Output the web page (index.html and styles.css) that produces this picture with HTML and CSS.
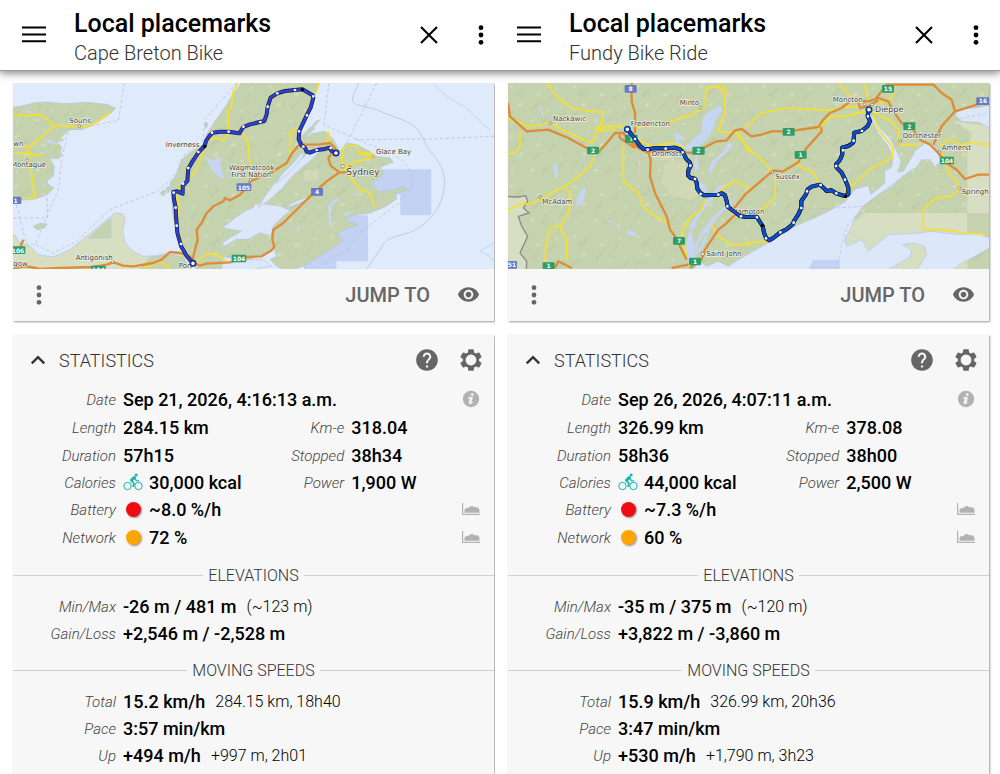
FILE: index.html
```html
<!DOCTYPE html>
<html lang="en">
<head>
<meta charset="utf-8">
<meta name="viewport" content="width=device-width, initial-scale=1">
<title>Local placemarks</title>
<link rel="stylesheet" href="styles.css">
</head>
<body>
<svg class="sprite" aria-hidden="true">
  <defs>
    <symbol id="i-menu" viewBox="0 0 24 24"><path d="M0 3.4h24v2H0zM0 10.4h24v2H0zM0 17.2h24v2H0z"/></symbol>
    <symbol id="i-close" viewBox="0 0 24 24"><path d="M4 4l16 16M20 4L4 20" fill="none" stroke="currentColor" stroke-width="2.1"/></symbol>
    <symbol id="i-more" viewBox="0 0 24 24"><circle cx="12" cy="4.7" r="2.4"/><circle cx="12" cy="12" r="2.4"/><circle cx="12" cy="19.3" r="2.4"/></symbol>
    <symbol id="i-eye" viewBox="0 0 24 24"><path d="M12 4.5C7 4.500 2.730 7.610 1 12c1.730 4.390 6 7.500 11 7.500s9.270-3.110 11-7.500c-1.730-4.390-6-7.500-11-7.500zM12 17c-2.760 0-5-2.240-5-5s2.240-5 5-5 5 2.240 5 5-2.240 5-5 5zm0-8c-1.660 0-3 1.340-3 3s1.340 3 3 3 3-1.340 3-3-1.340-3-3-3z"/></symbol>
    <symbol id="i-up" viewBox="0 0 24 24"><path d="M4.500 16L12 8.500l7.500 7.500" fill="none" stroke="currentColor" stroke-width="2.800"/></symbol>
    <symbol id="i-help" viewBox="0 0 24 24"><path d="M12 2C6.480 2 2 6.480 2 12s4.480 10 10 10 10-4.480 10-10S17.520 2 12 2zm1 17h-2v-2h2v2zm2.070-7.750l-.9.920C13.450 12.900 13 13.500 13 15h-2v-.5c0-1.100.450-2.100 1.170-2.830l1.240-1.260c.370-.360.590-.860.590-1.410 0-1.100-.9-2-2-2s-2 .9-2 2H8c0-2.210 1.790-4 4-4s4 1.790 4 4c0 .880-.360 1.680-.930 2.250z"/></symbol>
    <symbol id="i-gear" viewBox="0 0 24 24"><path fill-rule="evenodd" d="M19.430 12.980c.04-.32.07-.64.07-.98s-.03-.66-.07-.98l2.110-1.650c.19-.15.24-.42.12-.64l-2-3.460c-.12-.22-.39-.3-.61-.22l-2.490 1c-.52-.4-1.080-.73-1.690-.98l-.38-2.650C14.460 2.180 14.250 2 14 2h-4c-.25 0-.46.18-.49.42l-.38 2.650c-.61.25-1.170.59-1.690.98l-2.490-1c-.23-.09-.49 0-.61.22l-2 3.460c-.13.22-.07.49.12.64l2.110 1.650c-.04.32-.07.65-.07.98s.03.66.07.98l-2.110 1.650c-.19.15-.24.42-.12.64l2 3.460c.12.22.39.3.61.22l2.490-1c.52.4 1.080.73 1.690.98l.38 2.650c.03.24.24.42.49.42h4c.25 0 .46-.18.49-.42l.38-2.650c.61-.25 1.170-.59 1.690-.98l2.490 1c.23.09.49 0 .61-.22l2-3.460c.12-.22.07-.49-.12-.64l-2.110-1.650zM12 17a5 5 0 1 1 0-10 5 5 0 0 1 0 10z"/></symbol>
    <symbol id="i-info" viewBox="0 0 18 18"><circle cx="9" cy="9" r="8.200"/><circle cx="10.300" cy="4.600" r="1.400" fill="#f7f7f7"/><path d="M6.600 7.300h4l-1.500 5.400c-.1.600.4.500 1.400-.4-.9 1.600-3.900 2.400-3.500.3l1.200-4.200H6.400z" fill="#f7f7f7" stroke="#f7f7f7" stroke-width=".6"/></symbol>
    <symbol id="i-chart" viewBox="0 0 18 14"><path d="M0 1h1.200v10.800H18V13H0zM2.500 10.800V7.200L5 5.700l1.500.6L8 4l1 .8 1.200-1.200 1.500 1.800 1-1L14.500 5.800l1-.8 2 2.600v3.200z"/></symbol>
    <symbol id="i-bike" viewBox="0 0 20 18"><g fill="none" stroke="currentColor"><circle cx="4.500" cy="13" r="3.700" stroke-width="1"/><circle cx="15.500" cy="13" r="3.700" stroke-width="1"/><path d="M12.300 4.800L8.200 7.600l2.600 2.600-.6 3.800" stroke-width="1.700"/><path d="M12 5l1.300 2.600 3 .2" stroke-width="1.300"/></g><path d="M7 6.500l4-3.700 2.200 1.400-2.800 3.300-2.400 1z"/><circle cx="13.200" cy="2" r="1.500"/></symbol>
    <pattern id="flecks" width="190" height="150" patternUnits="userSpaceOnUse">
      <path fill="#dde3c4" opacity=".6" d="M12 20l9-5 3 6-8 6zM60 8l5 3-6 4zM95 42l10-2 4 6-7 3-9 1zM150 25l6-4 4 8-8 1zM38 75l12-7 6 5-10 9zM120 92l8-4 2 7-6 3zM168 78l5 1-2 8-5-3zM75 122l10-5 5 3-9 8zM18 128l6-4 2 6-5 4zM150 135l9-6 3 4-8 5z"/>
      <path fill="#aebf97" opacity=".3" d="M30 45l25-20 5 4-24 21zM80 85l22-18 3 4-20 18zM130 60l18-16 5 3-19 17zM10 105l20-16 3 3-20 17zM105 130l24-18 3 4-22 17zM160 110l17-14 4 3-18 15z"/>
    </pattern>
  </defs>
</svg>

<header class="appbar">
  <div class="bar">
    <button class="icon-btn menu" aria-label="Menu"><svg class="ic24"><use href="#i-menu"/></svg></button>
    <div class="titles"><h1>Local placemarks</h1><p>Cape Breton Bike</p></div>
    <button class="icon-btn" aria-label="Close"><svg class="ic24"><use href="#i-close"/></svg></button>
    <button class="icon-btn" aria-label="More"><svg class="ic24"><use href="#i-more"/></svg></button>
  </div>
  <div class="bar">
    <button class="icon-btn menu" aria-label="Menu"><svg class="ic24"><use href="#i-menu"/></svg></button>
    <div class="titles"><h2>Local placemarks</h2><p>Fundy Bike Ride</p></div>
    <button class="icon-btn" aria-label="Close"><svg class="ic24"><use href="#i-close"/></svg></button>
    <button class="icon-btn" aria-label="More"><svg class="ic24"><use href="#i-more"/></svg></button>
  </div>
</header>

<main class="panels">
  <section class="panel">
    <div class="card">
      <svg class="map" viewBox="9 10 1443 557" role="img" aria-label="Map of the Cape Breton Bike track">
        <rect class="sea" x="0" y="0" width="1470" height="580"/>
        <g class="deep">
          <path d="M1120 269h144v138h-93v-62l-60-10-30-10z"/>
          <path d="M1010 407h64v138h-95v30H882v-60l60-50z"/>
        </g>
        <g class="bounds">
          <path d="M343 10L325 122 175 152 155 240 145 330 75 495 130 520 200 485 300 390 440 335 490 295 520 230 580 180 585 120 680 10M9 415H112V350M15 360L50 495 75 495"/>
          <path d="M957 10L942 135 1020 170 1130 215M1100 10L1010 190M1035 180L1260 178 1452 170M1130 215C1190 240 1215 280 1205 325L1160 375 1060 450 1010 510 930 560"/>
        </g>
        <path class="shelf" d="M1045 10C1040 40 1010 60 1040 75L1100 90C1190 130 1220 120 1250 200 1280 240 1310 270 1303 325 1290 400 1250 430 1210 455 1150 475 1130 470 1110 510L1065 575"/>
        <path class="coastline" d="M1270 12L1310 50 1370 85 1410 125 1440 152M1452 490L1410 515 1440 530 1452 545"/>
        <g class="land">
          <path d="M0 85L40 78 75 69 110 67 160 72 230 68 290 74 318 86 300 102 270 122 245 138 215 150 178 150 166 160 155 172 160 182 140 188 158 205 150 212 156 225 145 238 120 234 133 262 130 290 114 300 112 312 132 325 112 345 75 358 0 364z"/>
          <path d="M700 0L680 30 665 50 640 90 615 125 592 160 578 195 545 215 515 240 505 270 497 290 480 310 485 340 487 400 498 450 510 500 528 530 545 548 560 570 700 572 720 540 765 520 790 505 800 530 780 540 800 560 830 575 880 560 920 535 970 505 1000 485 982 462 1015 445 1045 436 1005 420 1030 407 1080 400 1125 382 1160 358 1158 340 1195 332 1180 320 1150 332 1110 335 1085 318 1095 305 1125 280 1110 262 1150 248 1140 235 1090 230 1080 215 1040 195 1010 190 990 215 970 180 945 155 905 162 885 180 895 165 915 145 900 143 870 175 880 130 905 65 915 45 928 0z"/>
          <path d="M70 440l20-9 22 2-8 11-22 6zM450 340l12-10 6 5-8 15zM582 135l6-8 6 6-6 13zM468 325l10-5 3 12-8 8zM918 125l12-5-15 18-12 6z"/>
        </g>
        <path class="pale" d="M0 470L15 465 25 485 60 500 85 525 130 532 180 510 230 470 290 420 315 400 338 402 346 420 338 450 345 490 370 515 400 530 440 528 480 518 520 525 545 555 545 580H0z"/>
        <path class="land" d="M235 475L303 415V475zM380 580L420 533 480 525 520 532 540 580z"/>
        <path fill="url(#flecks)" d="M9 85L160 72 318 86 178 150 150 212 130 290 112 345 9 360zM620 130L700 10H915L870 175 850 230 1000 240 1130 240 1090 320 1160 345 1000 410 980 480 900 540 800 530 620 565 545 530 490 400 505 260z"/>
        <path fill="#dad9bd" opacity=".7" d="M882 271h45v32h-45z"/>
        <g class="lake">
          <path d="M735 374L770 374 810 379 842 394 820 409 790 439 782 469 750 459 715 479 680 479 645 499 635 492 660 474 695 454 660 449 638 444 670 419 705 394 730 384z"/>
          <path d="M745 382L765 350 790 315 825 282 870 242 900 215 920 200 935 210 905 240 850 286 815 328 770 368z"/>
          <path d="M800 310L810 290 845 255 870 225 885 215 878 232 850 265 820 295zM830 379L860 365 895 350 880 365 845 380zM640 530l40 10 80 0 25 20-90 15-60-5z"/>
        </g>
        <g class="water">
          <path d="M585 232L610 243 620 232 635 236 630 255 645 300 625 290 605 270zM955 380l18-20 20-5-25 20-6 25 5 50-10-15zM860 448l8-12 3 10-12 15zM1030 340l15-5-10 10zM1000 400l30-5-25 15z"/>
          <path d="M50 92l20 8-25-3zM80 220l30-5-15 8zM100 180l20 0 30 15-30-5zM100 315l15-5-10 12z"/>
        </g>
        <g class="road-y">
          <path d="M9 105L50 108 95 105 133 138 175 140 210 142 245 137 300 100M133 138L95 170 55 205 30 190M9 220H60L80 230 100 222M55 205L60 250 75 355 9 355"/>
          <path d="M683 10L668 40 665 80 652 95 658 140 645 180 635 182 620 175 600 178 585 185M697 155L715 190 718 230 725 285M580 215L560 270 535 300 515 320 495 335 508 380 500 430 515 490M560 545L580 530 600 522 620 525 650 545M400 565L450 545 480 565"/>
          <path d="M928 10L918 40M862 145L840 158 845 180 838 195 842 222M945 160L955 158 960 180 945 190M1025 290L1005 270 996 240 1000 205 1025 197 1042 200 1045 220 1090 230 1085 222 1040 218M1095 233L1040 245 1005 262M1020 290L1050 330 1078 338 1090 365 1092 382"/>
        </g>
        <g class="road-o">
          <path d="M9 568L40 560 60 562 90 568 150 565 250 562 290 555 310 548 340 558 370 560 430 550 455 540 480 517 510 520 540 530 548 550"/>
          <path d="M548 540L555 510 563 480 560 450 575 430 590 400 610 380 640 365 645 355 660 362 690 345 710 325 720 305 785 278 830 250 845 222 865 198 880 195 930 194 960 190 975 205 980 220"/>
          <path d="M548 550L570 558 590 552 660 548 710 532 755 530 785 512 793 500 787 480 790 450 820 430 850 400 900 350 950 305 988 278 1010 278 1022 258M988 278L962 258 955 235 965 222M40 480L25 515"/>
        </g>
        <g class="track track-a" transform="translate(480 9)">
          <path id="ta" d="M68 540L50 520 33 490 22 450 18 400 17 375 12 350 10 328 22 326 38 333 38 310 52 295 55 258 65 240 85 210 104 190 108 175 118 160 128 150 150 147 175 147 208 152 220 133 240 125 270 118 283 115 290 95 293 72 302 45 322 32 345 25 375 22 397 20 428 38 430 45 422 75 410 98 400 120 388 145 386 170 395 188 405 195 410 207 420 210 440 202 460 200 478 195 485 205 498 211"/>
          <use href="#ta" class="core"/>
          <path class="dots" d="M33 484h0M20 429h0M17 375h0M11 330h0M39 303h0M55 256h0M85 208h0M126 150h0M176 147h0M220 132h0M271 118h0M293 72h0M322 32h0M375 22h0M430 41h0M411 98h0M387 146h0M400 192h0M440 202h0M482 196h0"/>
          <path class="nodes" d="M104 191h0M397 21h0"/>
        </g>
        <g class="place"><circle cx="208" cy="140" r="4"/><circle cx="52" cy="242" r="4"/><circle cx="307" cy="547" r="4"/><circle cx="1090" cy="230" r="4"/><circle cx="722" cy="300" r="4"/><circle cx="998" cy="260" r="5"/></g>
        <g class="label">
          <text x="178" y="131">Souris</text><text x="10" y="200">wn</text><text x="3" y="263">Montague</text>
          <text x="467" y="203">Inverness</text><text x="657" y="272">Wagmatcook</text><text x="664" y="291">First Nation</text>
          <text x="197" y="541">Antigonish</text><text x="506" y="565">Port</text><text x="10" y="560">gow</text>
          <text x="1098" y="224">Glace Bay</text><text class="city" x="1009" y="285">Sydney</text>
        </g>
        <g class="shield blue"><rect x="680" y="311" width="44" height="23" rx="3"/><text x="702" y="330">105</text><rect x="903" y="325" width="36" height="23" rx="3"/><text x="921" y="343">4</text><rect x="0" y="351" width="34" height="22" rx="3"/><text x="17" y="369">1</text></g>
        <g class="shield green"><rect x="665" y="525" width="44" height="23" rx="3"/><text x="687" y="543">104</text><rect x="2" y="500" width="44" height="23" rx="3"/><text x="24" y="519">106</text><rect x="243" y="558" width="44" height="23" rx="3"/><text x="265" y="576">104</text></g>
        <g class="ends end-a"><circle cx="549" cy="551" r="8"/><circle cx="978" cy="220" r="8"/></g>
      </svg>
      <div class="toolbar">
        <button class="icon-btn" aria-label="Track menu"><svg class="ic24"><use href="#i-more"/></svg></button>
        <button class="jump">JUMP TO</button>
        <button class="icon-btn" aria-label="Visibility"><svg class="ic23"><use href="#i-eye"/></svg></button>
      </div>
    </div>

    <div class="card stats">
      <div class="stats-head">
        <button class="fold"><svg class="ic20"><use href="#i-up"/></svg>STATISTICS</button>
        <button class="icon-btn" aria-label="Help"><svg class="ic26"><use href="#i-help"/></svg></button>
        <button class="icon-btn" aria-label="Settings"><svg class="ic26"><use href="#i-gear"/></svg></button>
      </div>
      <dl class="rows">
        <div class="row tall wide"><dt>Date</dt><dd>Sep 21, 2026, 4:16:13 a.m.</dd><dd><button class="mini" aria-label="Info"><svg class="ic18"><use href="#i-info"/></svg></button></dd></div>
        <div class="row tall pair"><dt>Length</dt><dd>284.15 km</dd><dt>Km-e</dt><dd>318.04</dd></div>
        <div class="row pair"><dt>Duration</dt><dd>57h15</dd><dt>Stopped</dt><dd>38h34</dd></div>
        <div class="row pair"><dt>Calories</dt><dd><svg class="bike"><use href="#i-bike"/></svg>30,000 kcal</dd><dt>Power</dt><dd>1,900 W</dd></div>
        <div class="row tall wide"><dt>Battery</dt><dd><span class="dot red"></span>~8.0 %/h</dd><dd><button class="mini" aria-label="Battery chart"><svg class="chart"><use href="#i-chart"/></svg></button></dd></div>
        <div class="row tall wide"><dt>Network</dt><dd><span class="dot orange"></span>72 %</dd><dd><button class="mini" aria-label="Network chart"><svg class="chart"><use href="#i-chart"/></svg></button></dd></div>
      </dl>
      <h3 class="rule">ELEVATIONS</h3>
      <dl class="rows">
        <div class="row"><dt>Min/Max</dt><dd>-26 m / 481 m <small>(~123 m)</small></dd></div>
        <div class="row"><dt>Gain/Loss</dt><dd>+2,546 m / -2,528 m</dd></div>
      </dl>
      <h3 class="rule">MOVING SPEEDS</h3>
      <dl class="rows">
        <div class="row"><dt>Total</dt><dd>15.2 km/h <small>284.15 km, 18h40</small></dd></div>
        <div class="row"><dt>Pace</dt><dd>3:57 min/km</dd></div>
        <div class="row"><dt>Up</dt><dd>+494 m/h <small>+997 m, 2h01</small></dd></div>
      </dl>
    </div>
  </section>

  <section class="panel">
    <div class="card">
      <svg class="map" viewBox="9 10 1443 557" role="img" aria-label="Map of the Fundy Bike Ride track">
        <rect class="ground" x="0" y="0" width="1470" height="580"/>
        <rect fill="url(#flecks)" x="0" y="0" width="1470" height="580"/>
        <path class="pale" d="M0 350L40 352 62 348 68 365 55 385 72 400 40 410 50 440 68 470 45 520 65 545 60 580H0z"/>
        <path class="pale flat" d="M1350 125L1460 140V400H1387V220L1400 160zM1020 500L1030 440 1080 400H1387V580H1200z"/>
        <path fill="#d9dcb9" opacity=".6" d="M480 250L540 240 550 300 600 330 560 360 500 350 470 310zM430 215l70 0 10 30-60-5z"/>
        <path class="ground" d="M1387 400H1460V480L1387 465z"/>
        <g class="coast">
          <path d="M555 580L585 545 605 560 640 545 670 560 700 540 780 495 830 465 880 435 950 405 1020 367 1050 328 1090 318 1098 345 1140 310 1138 275 1160 262 1165 235 1150 200 1118 160 1105 130 1098 105 1112 120 1125 145 1155 175 1175 215 1188 245 1178 278 1195 275 1210 250 1230 215 1260 190 1285 195 1298 215 1305 245 1290 262 1275 240 1250 240 1235 262 1200 285 1160 320 1120 345 1080 375 1052 410 1040 440 1020 480 1025 500 1070 480 1090 515 1120 490 1150 465 1220 462 1280 455 1360 465 1420 462 1460 478V500L1410 530 1370 550 1330 580z"/>
          <path d="M1460 75L1410 85 1370 85 1350 105 1370 125 1420 128 1460 148z"/>
        </g>
        <path class="pale" d="M1130 580L1180 552 1215 532 1220 512 1193 495 1225 490 1258 500 1265 525 1230 580z"/>
        <path class="deep" d="M905 580L925 540H1004V580z"/>
        <g class="water">
          <path d="M590 135L595 110 615 95 640 78 653 85 645 105 630 120 628 140 618 160 600 185 575 205 550 212 535 200 550 195 565 175 590 160zM500 160l30 10 10 15-20-8zM500 190l20-5 15 12-10 3zM575 300l25 15 12 30-20-15zM575 215l5 40-8 30-5-30z"/>
          <path d="M610 280l10-35 30-25 15-25 20 0-20 25-25 20-25 45zM640 320l30-10-25 20-25 30-40 55-15 35-15 10 10-30 40-60zM700 345l-25 30-40 40-35 55-25 45-10-10 25-50 40-50 35-30zM555 420l-5 45-10 55 8 25 25-10-5-35zM590 470l-15 40-5 20 25-30 20-50z"/>
          <path d="M218 350l20-30 5 12-10 40-20 10zM145 260l8-12 8 40-10 10zM100 75l12 20 6 20-8-8zM370 450l25 10-5 12-25-12zM335 435l10 3-5 15zM195 345l5 0-3 20zM115 220l4 15-6-5zM300 425l20-5 0 8zM400 235l8 20-6 5zM510 170l10-15 4 20-8 15zM475 130l15 5-10 8zM1240 170l30-10 10 12-25 8z"/>
        </g>
        <g class="bounds"><path d="M800 430L900 390 1075 380 1220 270M1075 380L1025 440 1010 500 995 565M1350 120L1452 100M1340 140L1370 139"/></g>
        <path class="border" d="M0 350L40 352 62 348 68 365 55 385 72 400 40 410 50 440 68 470 45 520 65 545 64 580"/>
        <g class="road-y">
          <path d="M125 10L160 55 200 85 255 95 295 97 293 130 270 150 310 140 360 140M9 115L70 140 137 130 170 150 260 190 280 155 330 150M45 155L45 200 30 220 9 222M265 235L255 260 215 295 180 320 120 350 85 370 45 375 9 390M180 320L195 345 190 400 165 440 135 445 125 490 118 550M165 440L185 480 185 540M355 195L355 305 400 340 415 380 450 410 490 430M390 145L480 130 560 105 600 80 605 25 640 20 660 45 660 100 640 155 700 160 735 220M400 180L440 200 500 190 540 205M530 455L560 410 590 390 600 360M640 345L660 320 690 305 735 325M620 435L640 470 680 495 735 495M545 530L530 455M650 10L665 40"/>
          <path d="M720 145L770 100 850 85 980 92 1030 80 1080 85 1110 100 1160 125 1180 150 1185 195 1240 195M695 165L740 215 770 240 800 275M1000 10L1040 55M1080 10L1090 60M1165 10L1160 55 1120 75M940 150L955 130 980 110 1020 110 1080 95M1105 105L1120 150 1145 180 1165 205 1160 235 1100 265 1050 310 1020 330M875 245L890 265 925 275 940 310M812 285L810 355 760 400 740 410M720 345L760 310M1305 200L1330 180 1370 195 1400 190 1452 195M1310 220L1330 280 1360 310 1365 325 1340 350 1290 355 1255 390 1255 450 1310 450 1380 460 1440 465M720 490L790 485"/>
        </g>
        <g class="road-o">
          <path d="M9 70L15 110 65 155 130 150 190 175 245 205 280 218 310 185 330 160 355 160 365 175 400 205 430 220 437 240 435 290 450 340 485 410 495 450 510 470 530 510 545 540M343 165L345 175 390 205M430 215L530 218 565 220 605 200 635 185 665 182 690 152 710 148 740 170 770 165 800 155 850 155 900 148 940 142 955 120 975 100 1010 85 1040 62 1090 65 1120 55 1150 65 1165 95 1190 130 1225 150 1245 180 1275 195 1300 220 1325 250 1355 270 1380 298 1420 285 1452 285M555 565L590 540 600 510 640 450 660 435 690 405 688 385 720 345 755 315 790 285 805 273 835 275 880 248 905 205 950 155 948 142M380 10L380 65 390 100 390 160M150 565L160 545 200 565M1110 60L1145 15 1240 15 1285 15 1310 40 1340 60 1350 95 1310 140 1285 195M1350 95L1400 80 1452 60M500 565L550 555M1060 65L1065 85 1090 80 1120 62"/>
        </g>
        <g class="track track-b">
          <path id="tb" transform="translate(405 9)" d="M-38 139L-15 169 0 190 10 198 25 200 50 196 78 197 105 195 120 200 130 210 138 228 150 240 152 250 145 262 144 278 152 286 165 288 170 300 172 318 180 330 192 338 235 336 245 332 255 338 260 355 263 372 280 385 300 400 320 403 350 402 358 415 368 430 372 450 378 466 388 473 400 466 420 450 440 440 458 425 462 415 475 395 484 375 484 355 498 335 503 320 515 312 540 306 550 315 560 325 575 323 590 333 615 340 625 335 625 315 615 290 605 270 590 255 588 245 600 232 607 215 606 195 625 190 640 180 643 150 665 145 683 130 690 115 683 100 686 82"/>
        </g>
        <g class="place"><circle cx="137" cy="130" r="4"/><circle cx="586" cy="84" r="4"/><circle cx="105" cy="352" r="4"/><circle cx="593" cy="523" r="5"/><circle cx="802" cy="277" r="4"/><circle cx="1186" cy="184" r="4"/><circle cx="1304" cy="217" r="4"/><circle cx="1364" cy="326" r="4"/><circle cx="1078" cy="74" r="4"/><circle cx="1101" cy="74" r="4"/></g>
        <g class="label">
          <text x="144" y="125">Nackawic</text><text x="524" y="77">Minto</text><text x="377" y="138">Fredericton</text>
          <text x="440" y="229">Oromocto</text><text x="112" y="372">McAdam</text><text x="604" y="530">Saint John</text>
          <text x="983" y="67">Moncton</text><text class="town" x="1110" y="96">Dieppe</text><text x="1193" y="176">Dorchester</text>
          <text x="1310" y="211">Amherst</text><text x="1370" y="342">Springhi</text><text x="811" y="297">Sussex</text><text x="682" y="403">Hampton</text>
        </g>
        <g class="shield blue"><rect x="359" y="16" width="36" height="23" rx="3"/><text x="377" y="35">8</text><rect x="1414" y="53" width="40" height="23" rx="3"/><text x="1434" y="71">16</text><rect x="0" y="544" width="36" height="23" rx="3"/><text x="21" y="562">51</text></g>
        <g class="shield green"><rect x="246" y="201" width="36" height="23" rx="3"/><text x="264" y="219">2</text><rect x="360" y="165" width="38" height="24" rx="3"/><text x="379" y="184">7</text><rect x="562" y="201" width="37" height="24" rx="3"/><text x="580" y="220">2</text><rect x="504" y="472" width="36" height="23" rx="3"/><text x="522" y="491">7</text><rect x="552" y="534" width="36" height="23" rx="3"/><text x="570" y="552">1</text><rect x="113" y="548" width="36" height="23" rx="3"/><text x="131" y="566">1</text><rect x="1131" y="16" width="36" height="23" rx="3"/><text x="1149" y="34">15</text><rect x="1195" y="128" width="36" height="23" rx="3"/><text x="1213" y="147">2</text><rect x="833" y="145" width="36" height="23" rx="3"/><text x="851" y="163">2</text><rect x="869" y="214" width="36" height="23" rx="3"/><text x="887" y="232">1</text><rect x="1305" y="231" width="42" height="23" rx="3"/><text x="1326" y="249">104</text></g>
        <g class="track track-b">
          <use href="#tb"/>
          <use href="#tb" class="core"/>
          <path class="dots" d="M390 178h0M428 210h0M482 207h0M533 218h0M556 258h0M570 298h0M587 343h0M640 345h0M667 380h0M708 410h0M756 413h0M783 476h0M826 458h0M866 429h0M889 385h0M906 335h0M947 316h0M994 341h0M1020 300h0M993 259h0M1014 212h0M1046 183h0M1071 154h0M1089 110h0"/>
          <path class="nodes" d="M1022 350h0M772 438h0"/>
        </g>
        <g class="ends end-b"><circle cx="367" cy="149" r="8"/><circle cx="1092" cy="90" r="8"/></g>
      </svg>
      <div class="toolbar">
        <button class="icon-btn" aria-label="Track menu"><svg class="ic24"><use href="#i-more"/></svg></button>
        <button class="jump">JUMP TO</button>
        <button class="icon-btn" aria-label="Visibility"><svg class="ic23"><use href="#i-eye"/></svg></button>
      </div>
    </div>

    <div class="card stats">
      <div class="stats-head">
        <button class="fold"><svg class="ic20"><use href="#i-up"/></svg>STATISTICS</button>
        <button class="icon-btn" aria-label="Help"><svg class="ic26"><use href="#i-help"/></svg></button>
        <button class="icon-btn" aria-label="Settings"><svg class="ic26"><use href="#i-gear"/></svg></button>
      </div>
      <dl class="rows">
        <div class="row tall wide"><dt>Date</dt><dd>Sep 26, 2026, 4:07:11 a.m.</dd><dd><button class="mini" aria-label="Info"><svg class="ic18"><use href="#i-info"/></svg></button></dd></div>
        <div class="row tall pair"><dt>Length</dt><dd>326.99 km</dd><dt>Km-e</dt><dd>378.08</dd></div>
        <div class="row pair"><dt>Duration</dt><dd>58h36</dd><dt>Stopped</dt><dd>38h00</dd></div>
        <div class="row pair"><dt>Calories</dt><dd><svg class="bike"><use href="#i-bike"/></svg>44,000 kcal</dd><dt>Power</dt><dd>2,500 W</dd></div>
        <div class="row tall wide"><dt>Battery</dt><dd><span class="dot red"></span>~7.3 %/h</dd><dd><button class="mini" aria-label="Battery chart"><svg class="chart"><use href="#i-chart"/></svg></button></dd></div>
        <div class="row tall wide"><dt>Network</dt><dd><span class="dot orange"></span>60 %</dd><dd><button class="mini" aria-label="Network chart"><svg class="chart"><use href="#i-chart"/></svg></button></dd></div>
      </dl>
      <h3 class="rule">ELEVATIONS</h3>
      <dl class="rows">
        <div class="row"><dt>Min/Max</dt><dd>-35 m / 375 m <small>(~120 m)</small></dd></div>
        <div class="row"><dt>Gain/Loss</dt><dd>+3,822 m / -3,860 m</dd></div>
      </dl>
      <h3 class="rule">MOVING SPEEDS</h3>
      <dl class="rows">
        <div class="row"><dt>Total</dt><dd>15.9 km/h <small>326.99 km, 20h36</small></dd></div>
        <div class="row"><dt>Pace</dt><dd>3:47 min/km</dd></div>
        <div class="row"><dt>Up</dt><dd>+530 m/h <small>+1,790 m, 3h23</small></dd></div>
      </dl>
    </div>
  </section>
</main>
</body>
</html>
```
FILE: styles.css
```css
* { box-sizing: border-box; }
body {
  margin: 0;
  min-height: 100vh;
  display: flex;
  flex-direction: column;
  background: #fff;
  color: #000;
  font-family: Roboto, "Liberation Sans", sans-serif;
}
h1, h2, h3, p, dl, dd { margin: 0; }
button {
  border: 0;
  padding: 0;
  background: none;
  color: inherit;
  font: inherit;
  cursor: pointer;
}
svg { display: block; fill: currentColor; flex: none; }
.sprite { position: absolute; width: 0; height: 0; }
.ic18 { width: 18px; height: 18px; }
.ic20 { width: 20px; height: 20px; }
.ic23 { width: 23px; height: 23px; }
.ic24 { width: 24px; height: 24px; }
.ic26 { width: 26px; height: 26px; }
.chart { width: 18px; height: 14px; }
.icon-btn {
  display: grid;
  place-items: center;
  width: 28px;
  height: 40px;
}

.appbar, .panels {
  display: grid;
  grid-template-columns: 1fr 1fr;
  padding-right: 10px;
}
.appbar {
  border-bottom: 1px solid #999;
  box-shadow: 0 2px 8px rgba(0, 0, 0, .5);
}
.bar {
  display: flex;
  align-items: center;
  gap: 24px;
  height: 70px;
  padding-left: 20px;
}
.titles { flex: 1; min-width: 0; padding: 6px 0 0 2px; }
.titles h1, .titles h2 { font-size: 25px; font-weight: 500; line-height: 30px; }
.titles p { font-size: 20px; font-weight: 300; line-height: 28px; color: #333; }

.panels { flex: 1; padding-top: 12px; }
.panel {
  display: flex;
  flex-direction: column;
  gap: 14px;
  padding: 0 1px 0 13px;
}
.panel:first-child { overflow: hidden; }
.card {
  background: #f7f7f7;
  box-shadow: 1px 1px 2px rgba(0, 0, 0, .4);
}
.stats { flex: 1; }

.toolbar {
  display: flex;
  align-items: center;
  gap: 24px;
  height: 52px;
  padding: 0 12px;
  color: #666;
}
.jump { margin-left: auto; font-size: 20px; font-weight: 500; }

.stats-head {
  display: flex;
  align-items: center;
  gap: 16px;
  height: 51px;
  padding: 0 9px 0 15px;
  color: #666;
}
.fold {
  display: flex;
  align-items: center;
  gap: 11px;
  margin-right: auto;
  font-size: 18px;
  font-weight: 300;
  color: #333;
}
.row {
  display: grid;
  grid-template-columns: 103px minmax(0, 1fr);
  column-gap: 7px;
  align-items: center;
  height: 27px;
  padding-right: 14px;
}
.row.tall { height: 28px; }
.row.wide { grid-template-columns: 103px minmax(0, 1fr) 18px; }
.row.pair { grid-template-columns: 103px minmax(0, 7fr) 64px minmax(0, 6fr); }
dt {
  padding-top: 1px;
  text-align: right;
  font-size: 15px;
  font-weight: 300;
  font-style: italic;
  color: #444;
}
dd {
  display: flex;
  align-items: center;
  font-size: 18px;
  font-weight: 500;
  white-space: nowrap;
}
small { margin-left: 10px; font-size: 16px; font-weight: 300; }
.bike { width: 20px; height: 18px; margin-right: 6px; color: #17b5ae; }
.dot {
  width: 15px;
  height: 15px;
  margin: 0 8px 0 3px;
  border-radius: 50%;
  box-shadow: 1px 1px 2px rgba(0, 0, 0, .4);
}
.red { background: #ef0d12; }
.orange { background: #ffa500; }
.mini { padding-bottom: 2px; color: #b2b2b2; }
.rule {
  display: flex;
  align-items: center;
  gap: 5px;
  margin: 12px 0 5px;
  font-size: 16px;
  font-weight: 300;
  line-height: 24px;
  color: #333;
}
.rule::before, .rule::after { content: ""; flex: 1; height: 1px; background: #d0d0d0; }

.map { width: 100%; height: auto; }
.sea { fill: #dfeafb; }
.ground { fill: #c4d2ad; }
.deep { fill: #c3d2f3; }
.land { fill: #c4d2ad; stroke: #b4c4e4; stroke-width: 2; }
.lake { fill: #dce8fa; stroke: #b4c4e4; stroke-width: 2; }
.pale { fill: #d8dec2; stroke: #b4c4e4; stroke-width: 2; }
.pale.flat { stroke: none; }
.coast { fill: #dce8fa; stroke: #b4c4e4; stroke-width: 2; }
.water { fill: #c5d5f3; }
.bounds { fill: none; stroke: #aebbd3; stroke-width: 2; stroke-dasharray: 10 7; }
.shelf { fill: none; stroke: #c4cad3; stroke-width: 3; }
.coastline { fill: none; stroke: #b4c9f4; stroke-width: 2; }
.border { fill: none; stroke: #8c8c8c; stroke-width: 4; }
.road-y { fill: none; stroke: #f6e02c; stroke-width: 5; stroke-linejoin: round; }
.road-o { fill: none; stroke: #dd8c38; stroke-width: 7; stroke-linejoin: round; }
.track { fill: none; stroke: #1c1c30; stroke-width: 12; stroke-linejoin: round; stroke-linecap: round; }
.track .core { stroke-width: 8; }
.track-a .core { stroke: #2c3fd8; }
.track-b .core { stroke: #0c4fd6; }
.track .dots { stroke: #fff; stroke-width: 8; }
.track .nodes { stroke: #000; stroke-width: 10; }
.place { fill: #fff; stroke: #666; stroke-width: 2; }
.label {
  fill: #404040;
  stroke: #f3f5ea;
  stroke-width: 4;
  stroke-linejoin: round;
  paint-order: stroke;
  font-family: "DejaVu Sans", sans-serif;
  font-size: 21px;
}
.label .town { font-size: 24px; }
.label .city { font-size: 27px; }
.shield { font-family: "DejaVu Sans", sans-serif; font-size: 18px; font-weight: 700; text-anchor: middle; }
.shield text { fill: #fff; }
.blue rect { fill: #6679c4; }
.green rect { fill: #2f9d68; }
.ends { fill: #fff; stroke-width: 5; }
.end-a { stroke: #1a2796; }
.end-b { stroke: #0d3f9f; }
```
